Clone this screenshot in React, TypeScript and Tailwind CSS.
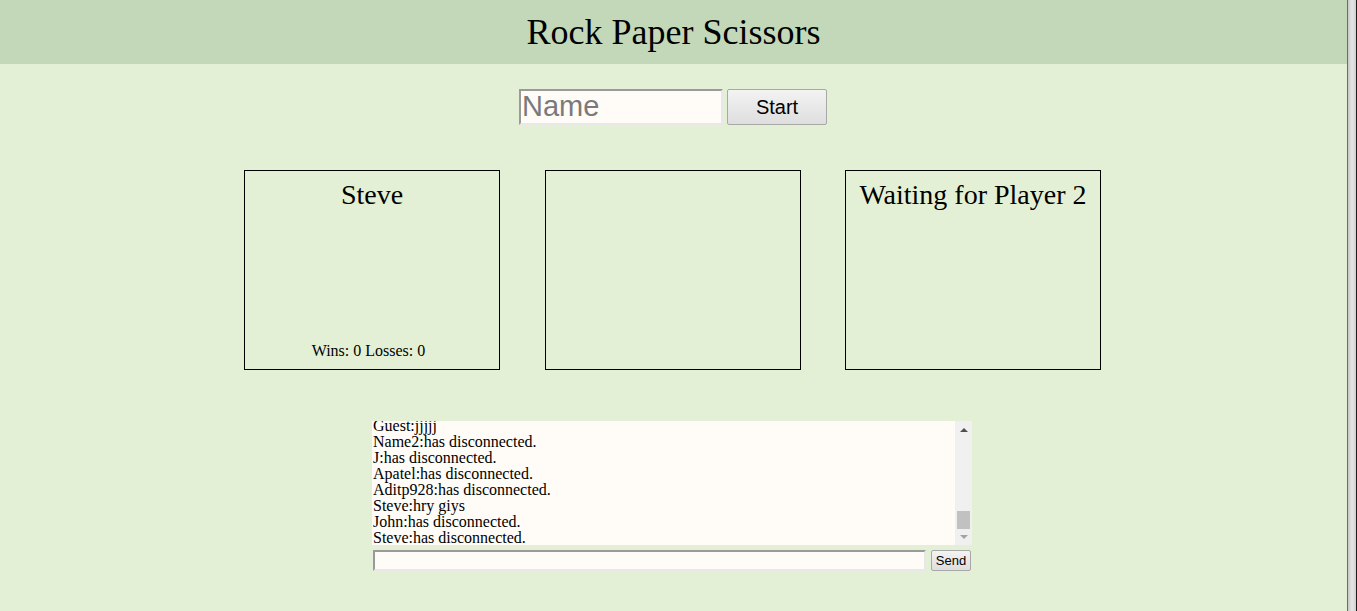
import React from "react";

const messages = [
  "Guest:jjjjj",
  "Name2:has disconnected.",
  "J:has disconnected.",
  "Apatel:has disconnected.",
  "Aditp928:has disconnected.",
  "Steve:hry giys",
  "John:has disconnected.",
  "Steve:has disconnected.",
];

const PlayerBox = ({ title, footer }: { title?: string; footer?: string }) => (
  <div className="flex h-[200px] w-[256px] flex-col items-center justify-between border border-black pt-[8px] pb-[9px]">
    <div className="text-[28px] leading-[32px]">{title}</div>
    {footer && <div className="pr-[7px] text-[16px] leading-[18px]">{footer}</div>}
  </div>
);

export default function App() {
  return (
    <div className="flex h-[611px] w-[1357px] overflow-hidden bg-[#e4f0d5] font-['Liberation_Serif',serif] text-black">
      <div className="flex w-[1347px] flex-col">
        <header className="flex h-[64px] items-center justify-center bg-[#c2d8b8] pb-[1px]">
          <h1 className="text-[36px] leading-none">Rock Paper Scissors</h1>
        </header>

        <div className="mt-[25px] flex justify-center gap-[4px] pr-[1px]">
          <input
            placeholder="Name"
            className="h-[36px] w-[204px] border-2 border-t-[#9a9a9a] border-l-[#9a9a9a] border-r-[#e8e8e8] border-b-[#e8e8e8] bg-[#fffcf8] px-[1px] font-['Liberation_Sans',sans-serif] text-[29px] placeholder:text-[#7a7a7a] outline-none"
          />
          <button className="h-[36px] w-[100px] rounded-[2px] border border-[#a8a8a8] bg-gradient-to-b from-[#f3f3f3] to-[#dedede] font-['Liberation_Sans',sans-serif] text-[20px]">
            Start
          </button>
        </div>

        <div className="mt-[45px] flex justify-center gap-[44.5px] pr-[2px]">
          <PlayerBox title="Steve" footer="Wins: 0 Losses: 0" />
          <PlayerBox />
          <PlayerBox title="Waiting for Player 2" />
        </div>

        <div className="mt-[51px] flex justify-center pr-[3px]">
          <div className="flex w-[600px] flex-col">
            <div className="flex h-[124px] bg-[#fffcf8]">
              <div className="flex-1 overflow-hidden pl-[1px] text-[16px] leading-[16px]">
                <div className="-mt-[3px]">
                  {messages.map((m, i) => (
                    <div key={i}>{m}</div>
                  ))}
                </div>
              </div>
              <div className="flex w-[17px] flex-col items-center bg-[#f0f0f0]">
                <div className="flex h-[17px] items-center justify-center">
                  <div className="h-0 w-0 border-x-[4px] border-b-[4px] border-x-transparent border-b-[#505050]" />
                </div>
                <div className="flex-1" />
                <div className="h-[18px] w-[13px] bg-[#c1c1c1]" />
                <div className="flex h-[16px] items-center justify-center">
                  <div className="h-0 w-0 border-x-[4px] border-t-[4px] border-x-transparent border-t-[#a3a3a3]" />
                </div>
              </div>
            </div>
            <div className="mt-[5px] flex gap-[5px] pl-[1px]">
              <input className="h-[21px] w-[553px] border-2 border-t-[#9a9a9a] border-l-[#9a9a9a] border-r-[#e8e8e8] border-b-[#e8e8e8] bg-[#fffcf8] outline-none" />
              <button className="h-[21px] w-[40px] rounded-[2px] border border-[#a8a8a8] bg-gradient-to-b from-[#f3f3f3] to-[#dedede] font-['Liberation_Sans',sans-serif] text-[13px] leading-none">
                Send
              </button>
            </div>
          </div>
        </div>
      </div>
      <div className="flex w-[10px]">
        <div className="w-[1px] bg-[#6b6b6b]" />
        <div className="flex-1 bg-gradient-to-r from-[#c8c8c8] via-[#e6e6e6] to-[#d0d0d0]" />
        <div className="w-[1px] bg-[#1c1c1c]" />
      </div>
    </div>
  );
}
